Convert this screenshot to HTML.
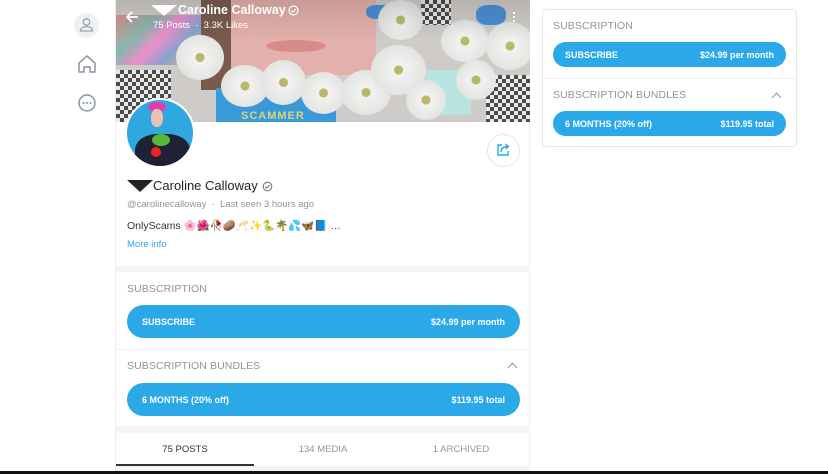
<!DOCTYPE html>
<html><head><meta charset="utf-8"><style>
*{box-sizing:border-box;margin:0;padding:0}
body{width:828px;height:474px;overflow:hidden;background:#fff;font-family:"Liberation Sans","Noto Sans CJK JP",sans-serif;position:relative}
.abs{position:absolute}
.main{left:115px;top:0;width:415px;height:471px;border-left:1px solid #eceef0;border-right:1px solid #eceef0}
.banner{left:0;top:0;width:414px;height:122px;overflow:hidden;background:#cfcbc9}
.lbl{font-size:10.5px;color:#8a96a3;letter-spacing:.1px}
.btn{background:#2aa8e8;border-radius:17px;color:#fff;font-size:9px;font-weight:bold;display:flex;justify-content:space-between;align-items:center;padding:0 15px}
.chev{width:7px;height:7px;border-left:1.5px solid #8a96a3;border-top:1.5px solid #8a96a3;transform:rotate(45deg)}
.chk{background:repeating-conic-gradient(#333 0 25%,#eee 0 50%) 0 0/8px 8px;opacity:.85}
.fl{border-radius:50%;background:radial-gradient(circle,#b9b86a 0 4px,#f2f2f0 5px,#dcdcda 100%)}
</style></head><body>
<div class="abs" style="left:74px;top:13px;width:25px;height:25px;border-radius:50%;background:#eef0f2"></div>
<svg class="abs" style="left:79px;top:17px" width="15" height="16" viewBox="0 0 15 16"><circle cx="7.5" cy="5" r="3.2" fill="none" stroke="#9aa4ae" stroke-width="1.3"/><path d="M1.5 14c0-3 2.7-4.5 6-4.5s6 1.5 6 4.5z" fill="none" stroke="#9aa4ae" stroke-width="1.3"/></svg>
<svg class="abs" style="left:77px;top:54px" width="20" height="20" viewBox="0 0 20 20"><path d="M2 9L10 2l8 7v9h-5v-5H7v5H2z" fill="none" stroke="#8a96a3" stroke-width="1.5" stroke-linejoin="round"/></svg>
<svg class="abs" style="left:77px;top:93px" width="20" height="20" viewBox="0 0 20 20"><circle cx="10" cy="10" r="8" fill="none" stroke="#8a96a3" stroke-width="1.5"/><circle cx="6.5" cy="10" r="1" fill="#8a96a3"/><circle cx="10" cy="10" r="1" fill="#8a96a3"/><circle cx="13.5" cy="10" r="1" fill="#8a96a3"/></svg>

<div class="abs main">
 <div class="abs banner">
  <div class="abs" style="left:0;top:15px;width:85px;height:50px;background:linear-gradient(135deg,#e66 0,#5a9 30%,#f6c 50%,#58c 70%,#fb5 100%);opacity:.6"></div>
  <div class="abs" style="left:110px;top:0;width:150px;height:75px;background:#e3b0ab"></div>
  <div class="abs" style="left:85px;top:0;width:30px;height:90px;background:#7a5a4e"></div>
  <div class="abs" style="left:150px;top:40px;width:60px;height:12px;border-radius:50%;background:#d98a8a"></div>
  <div class="abs chk" style="left:0;top:70px;width:55px;height:52px"></div>
  <div class="abs chk" style="left:370px;top:75px;width:44px;height:47px"></div>
  <div class="abs chk" style="left:305px;top:0;width:30px;height:25px"></div>
  <div class="abs" style="left:100px;top:88px;width:120px;height:34px;background:#3a9ad9"></div>
  <div class="abs" style="left:310px;top:70px;width:45px;height:45px;background:#b7e4e0"></div>
  <div class="abs" style="left:250px;top:5px;width:28px;height:14px;background:#4a8fd6;border-radius:40%"></div>
  <div class="abs" style="left:360px;top:5px;width:30px;height:20px;background:#4a8fd6;border-radius:40%"></div>
  <div class="abs fl" style="left:60px;top:35px;width:48px;height:45px"></div>
  <div class="abs fl" style="left:105px;top:65px;width:48px;height:42px"></div>
  <div class="abs fl" style="left:145px;top:60px;width:45px;height:45px"></div>
  <div class="abs fl" style="left:185px;top:72px;width:45px;height:42px"></div>
  <div class="abs fl" style="left:225px;top:70px;width:50px;height:45px"></div>
  <div class="abs fl" style="left:255px;top:45px;width:55px;height:50px"></div>
  <div class="abs fl" style="left:262px;top:0;width:45px;height:40px"></div>
  <div class="abs fl" style="left:325px;top:20px;width:48px;height:42px"></div>
  <div class="abs fl" style="left:370px;top:22px;width:48px;height:48px"></div>
  <div class="abs fl" style="left:340px;top:60px;width:40px;height:40px"></div>
  <div class="abs fl" style="left:290px;top:80px;width:40px;height:40px"></div>
  <div class="abs" style="left:125px;top:110px;font-size:11px;color:#d8d47a;font-weight:bold;letter-spacing:1px">SCAMMER</div>
  <div class="abs" style="left:0;top:0;width:414px;height:40px;background:linear-gradient(rgba(0,0,0,.12),rgba(0,0,0,0))"></div>
 </div>
 <svg class="abs" style="left:9px;top:10px" width="14" height="14" viewBox="0 0 14 14"><path d="M13 7H2M7 2L2 7l5 5" fill="none" stroke="#fff" stroke-width="1.8"/></svg>
 <div class="abs" style="left:35px;top:5px;width:0;height:0;border-left:13px solid transparent;border-right:13px solid transparent;border-top:11px solid #fff"></div>
 <div class="abs" style="left:62px;top:3px;font-size:12.5px;font-weight:bold;color:#fff">Caroline Calloway</div>
 <svg class="abs" style="left:172px;top:5px" width="11" height="11" viewBox="0 0 11 11"><circle cx="5.5" cy="5.5" r="4.5" fill="none" stroke="#fff" stroke-width="1.2"/><path d="M3.3 5.6l1.5 1.5 3-3" fill="none" stroke="#fff" stroke-width="1.2"/></svg>
 <div class="abs" style="left:37px;top:20px;font-size:9.5px;color:#fff">75 Posts &nbsp;·&nbsp; 3.3K Likes</div>
 <div class="abs" style="left:397px;top:11px;width:2px;height:11px;background:radial-gradient(circle,#fff 1px,transparent 1.2px) 0 0/2px 4px"></div>
 <div class="abs" style="left:9px;top:98px;width:70px;height:70px;border-radius:50%;background:#fff;padding:2px">
  <div style="width:66px;height:66px;border-radius:50%;overflow:hidden;position:relative;background:#2ea8df">
   <div class="abs" style="left:21px;top:2px;width:18px;height:10px;background:#e83aa8;border-radius:50%"></div>
   <div class="abs" style="left:24px;top:9px;width:12px;height:18px;background:#e8c2b0;border-radius:45%"></div>
   <div class="abs" style="left:8px;top:34px;width:55px;height:40px;background:#1f2235;border-radius:40% 40% 0 0"></div>
   <div class="abs" style="left:25px;top:34px;width:18px;height:12px;background:#58b83a;border-radius:50%"></div>
   <div class="abs" style="left:24px;top:47px;width:10px;height:10px;background:#e22;border-radius:50%"></div>
  </div>
 </div>
 <div class="abs" style="left:371px;top:134px;width:33px;height:33px;border-radius:50%;border:1px solid #e3e6e9"></div>
 <svg class="abs" style="left:380px;top:142px" width="15" height="15" viewBox="0 0 15 15"><path d="M6 3H2v10h10V9" fill="none" stroke="#2aa8e8" stroke-width="1.4"/><path d="M5 10c0-4 3-5.5 7-5.5M9.5 2l2.8 2.5-2.8 2.5" fill="none" stroke="#2aa8e8" stroke-width="1.4"/></svg>
 <div class="abs" style="left:11px;top:180px;width:0;height:0;border-left:13px solid transparent;border-right:13px solid transparent;border-top:12px solid #222"></div>
 <div class="abs" style="left:37px;top:178px;font-size:13px;color:#1f1f1f">Caroline Calloway</div>
 <svg class="abs" style="left:146px;top:181px" width="11" height="11" viewBox="0 0 11 11"><circle cx="5.5" cy="5.5" r="4.3" fill="none" stroke="#777" stroke-width="1.1"/><path d="M3.3 5.6l1.5 1.5 3-3" fill="none" stroke="#777" stroke-width="1.1"/></svg>
 <div class="abs" style="left:11px;top:199px;font-size:9.5px;color:#8a96a3">@carolinecalloway &nbsp;·&nbsp; Last seen 3 hours ago</div>
 <div class="abs" style="left:11px;top:219px;font-size:10.5px;color:#333">OnlyScams 🌸🌺🥀🥔🥂✨🐍🌴💦🦋📘 …</div>
 <div class="abs" style="left:11px;top:239px;font-size:9.5px;color:#2aa8e8">More info</div>
 <div class="abs" style="left:0;top:266px;width:414px;height:6px;background:#f3f5f7"></div>
 <div class="abs lbl" style="left:11px;top:283px">SUBSCRIPTION</div>
 <div class="abs btn" style="left:11px;top:305px;width:393px;height:33px"><span>SUBSCRIBE</span><span>$24.99 per month</span></div>
 <div class="abs" style="left:0;top:349px;width:414px;height:1px;background:#eceef0"></div>
 <div class="abs lbl" style="left:11px;top:360px">SUBSCRIPTION BUNDLES</div>
 <div class="abs chev" style="left:393px;top:364px"></div>
 <div class="abs btn" style="left:11px;top:383px;width:393px;height:33px"><span>6 MONTHS (20% off)</span><span>$119.95 total</span></div>
 <div class="abs" style="left:0;top:426px;width:414px;height:7px;background:#f3f5f7"></div>
 <div class="abs" style="left:0;top:444px;width:138px;text-align:center;font-size:9.5px;color:#333">75 POSTS</div>
 <div class="abs" style="left:138px;top:444px;width:138px;text-align:center;font-size:9.5px;color:#8a96a3">134 MEDIA</div>
 <div class="abs" style="left:276px;top:444px;width:138px;text-align:center;font-size:9.5px;color:#8a96a3">1 ARCHIVED</div>
 <div class="abs" style="left:0;top:464px;width:138px;height:2px;background:#333"></div>
 <div class="abs" style="left:0;top:466px;width:414px;height:5px;background:#f3f5f7"></div>
</div>

<div class="abs" style="left:542px;top:9px;width:255px;height:138px;border:1px solid #e6e8eb;border-radius:4px">
 <div class="abs lbl" style="left:10px;top:10px">SUBSCRIPTION</div>
 <div class="abs btn" style="left:10px;top:32px;width:233px;height:25px;border-radius:13px;padding:0 12px;font-size:9px"><span>SUBSCRIBE</span><span>$24.99 per month</span></div>
 <div class="abs" style="left:0;top:68px;width:253px;height:1px;background:#eceef0"></div>
 <div class="abs lbl" style="left:10px;top:79px">SUBSCRIPTION BUNDLES</div>
 <div class="abs chev" style="left:230px;top:84px"></div>
 <div class="abs btn" style="left:10px;top:101px;width:233px;height:25px;border-radius:13px;padding:0 12px;font-size:9px"><span>6 MONTHS (20% off)</span><span>$119.95 total</span></div>
</div>
<div class="abs" style="left:0;top:471px;width:828px;height:3px;background:#111"></div>
</body></html>
